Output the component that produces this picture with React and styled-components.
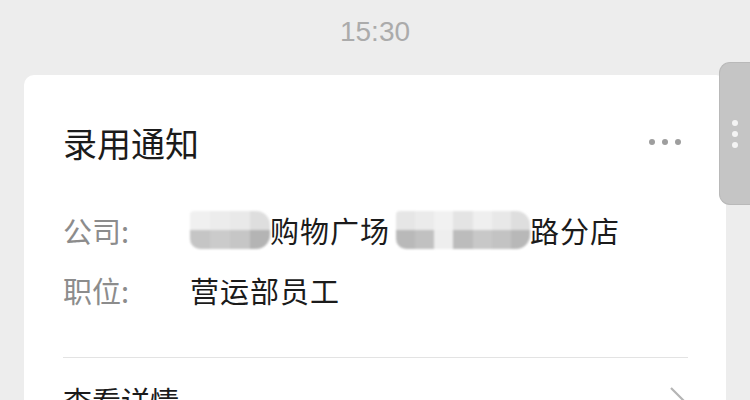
import React from "react"
import styled, { createGlobalStyle } from "styled-components"

const GlobalStyle = createGlobalStyle`
    html, body {
        margin: 0;
        padding: 0;
        background: #ededed;
    }
    body {
        font-family: "Noto Sans CJK SC", "Noto Sans", sans-serif;
    }
`

const mosaicA = {
    top: ["#f0f0f0", "#ececec", "#e9e9e9", "#dedede"],
    bottom: ["#c5c5c5", "#cbcbcb", "#c6c6c6", "#b4b4b4"],
}

const mosaicB = {
    top: ["#e6e6e6", "#ebebeb", "#f1f1f1", "#e4e4e4", "#efefef", "#e8e8e8", "#dedede"],
    bottom: ["#b9b9b9", "#c1c1c1", "#eeeeee", "#bcbcbc", "#c8c8c8", "#c3c3c3", "#b8b8b8"],
}

const Mosaic = ({ cells, width, left }) => (
    <MosaicBox $cols={cells.top.length} $width={width} $left={left}>
        {cells.top.concat(cells.bottom).map((c, i) => (
            <MosaicCell key={i} $color={c} />
        ))}
    </MosaicBox>
)

const InfoRow = ({ label, children }) => (
    <Row>
        <Label>{label}</Label>
        <Value>{children}</Value>
    </Row>
)

export default function App() {
    return (
        <Page>
            <GlobalStyle />
            <Time>15:30</Time>

            <Card>
                <CardHeader>
                    <Title>录用通知</Title>
                    <MoreDots>
                        <Dot />
                        <Dot />
                        <Dot />
                    </MoreDots>
                </CardHeader>

                <InfoList>
                    <InfoRow label="公司:">
                        <Mosaic cells={mosaicA} width={80} left={0} />
                        <span>购物广场</span>
                        <Mosaic cells={mosaicB} width={134} left={6} />
                        <span>路分店</span>
                    </InfoRow>
                    <InfoRow label="职位:">营运部员工</InfoRow>
                </InfoList>

                <Divider />

                <Footer>
                    <span>查看详情</span>
                    <svg width="18" height="30" viewBox="0 0 18 30">
                        <polyline points="3,3 15,15 3,27" fill="none" stroke="#b5b5b5" strokeWidth="2.2" />
                    </svg>
                </Footer>
            </Card>

            <SideHandle>
                <HandleDot />
                <HandleDot />
                <HandleDot />
            </SideHandle>
        </Page>
    )
}

const Page = styled.div`
    position: relative;
    width: 750px;
    height: 400px;
    overflow: hidden;
    background: #ededed;
`

const Time = styled.div`
    height: 64px;
    margin-bottom: 11px;
    line-height: 64px;
    text-align: center;
    font-family: "Liberation Sans", "Noto Sans", sans-serif;
    font-size: 28px;
    color: #ababab;
`

const Card = styled.div`
    margin: 0 24px;
    padding: 0 38px 0 39px;
    background: #ffffff;
    border-radius: 10px;
    height: 360px;
`

const CardHeader = styled.div`
    display: flex;
    align-items: center;
    justify-content: space-between;
    padding-top: 50px;
    height: 36px;
`

const Title = styled.div`
    font-size: 34px;
    line-height: 36px;
    color: #1b1b1b;
`

const MoreDots = styled.div`
    display: flex;
    gap: 7px;
    margin-right: 7px;
    margin-top: -3px;
`

const Dot = styled.span`
    width: 6px;
    height: 6px;
    border-radius: 50%;
    background: #9e9e9e;
`

const InfoList = styled.div`
    display: flex;
    flex-direction: column;
    gap: 20px;
    margin-top: 49px;
`

const Row = styled.div`
    display: flex;
    align-items: center;
    height: 40px;
`

const Label = styled.div`
    width: 127px;
    flex-shrink: 0;
    font-size: 29px;
    color: #8c8c8c;
`

const Value = styled.div`
    display: flex;
    align-items: center;
    font-size: 29px;
    letter-spacing: 1px;
    color: #1b1b1b;
    white-space: nowrap;
`

const MosaicBox = styled.div`
    display: grid;
    grid-template-columns: repeat(${p => p.$cols}, 1fr);
    grid-template-rows: 1fr 1fr;
    width: ${p => p.$width}px;
    height: 38px;
    margin-left: ${p => p.$left}px;
    border-radius: 4px 14px 14px 10px;
    overflow: hidden;
    filter: blur(0.8px);
`

const MosaicCell = styled.div`
    background: ${p => p.$color};
`

const Divider = styled.div`
    height: 1px;
    margin-top: 47px;
    background: #e3e3e3;
`

const Footer = styled.div`
    display: flex;
    align-items: center;
    justify-content: space-between;
    padding-top: 22px;
    height: 40px;
    font-size: 29px;
    color: #1b1b1b;
    svg {
        margin-right: 2px;
    }
`

const SideHandle = styled.div`
    position: absolute;
    top: 62px;
    right: 0;
    width: 31px;
    height: 143px;
    box-sizing: border-box;
    border: 1px solid #b9b9b9;
    border-right: none;
    border-radius: 11px 0 0 11px;
    background: #c5c5c5;
    display: flex;
    flex-direction: column;
    align-items: center;
    justify-content: center;
    gap: 5px;
    padding-right: 1px;
`

const HandleDot = styled.span`
    width: 6px;
    height: 6px;
    border-radius: 50%;
    background: #f4f4f4;
`
